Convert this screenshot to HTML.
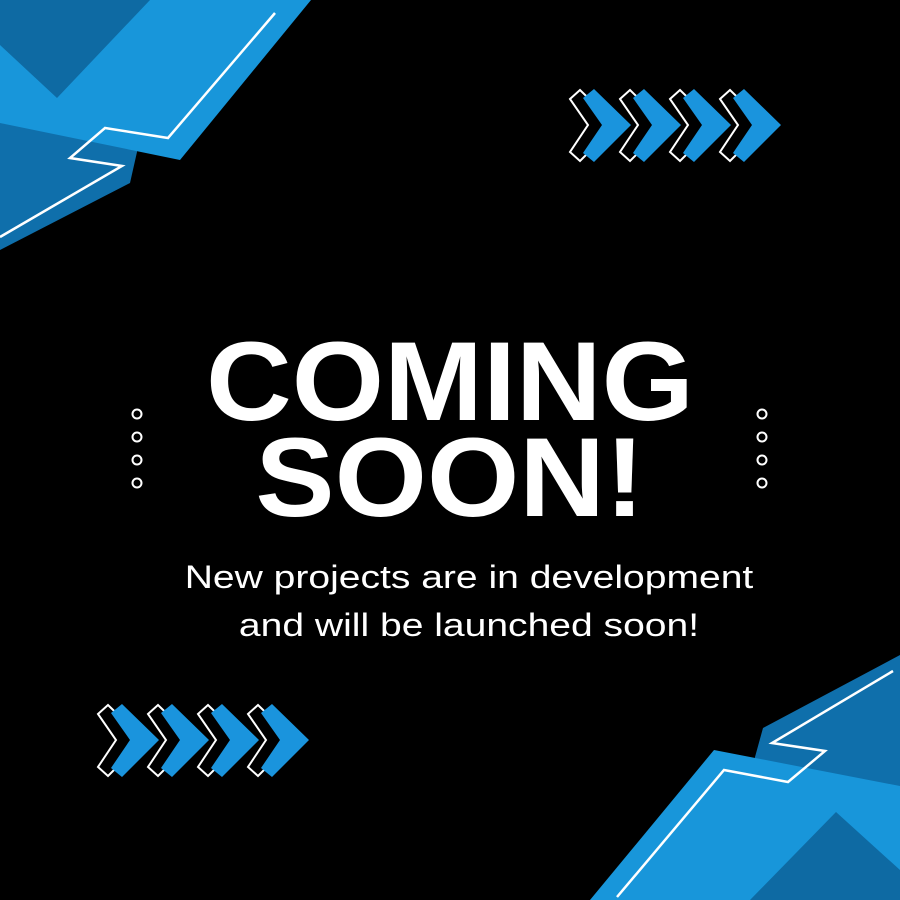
<!DOCTYPE html>
<html><head><style>
html,body{margin:0;padding:0;background:#000;}
body{width:900px;height:900px;position:relative;overflow:hidden;font-family:"Liberation Sans",sans-serif;}
.t{position:absolute;left:0;width:900px;text-align:center;color:#fff;}
</style></head><body>
<svg width="900" height="900" style="position:absolute;left:0;top:0">
<defs>
<g id="chev">
<polygon points="-13,10 -3,1 33,36 -3,72 -13,63 5,36" fill="#000" stroke="#fff" stroke-width="2"/>
<polygon points="0,9 11,0 48,36 11,73 0,64 19,36" fill="#1a94dd"/>
</g>
</defs>
<!-- top-left -->
<polygon points="0,100 140,120 137,152 130,183 0,250" fill="#0f6fab"/>
<polygon points="0,0 311,0 180,160 0,123" fill="#1896da"/>
<polygon points="0,0 150,0 57,98 0,45" fill="#0e6aa3"/>
<polyline points="275,13 168,138 105,128 70,158 122,166 0,237" fill="none" stroke="#fff" stroke-width="2.5"/>
<!-- bottom-right -->
<polygon points="900,655 900,900 740,900 755,757 763,728" fill="#0f6fab"/>
<polygon points="714,750 900,786 900,900 590,900" fill="#1896da"/>
<polygon points="836,812 900,870 900,900 750,900" fill="#0e6aa3"/>
<polyline points="893,671 772,743 825,751 788,782 724,770 617,897" fill="none" stroke="#fff" stroke-width="2.5"/>
<!-- chevrons -->
<use href="#chev" x="583" y="89"/><use href="#chev" x="633" y="89"/><use href="#chev" x="683" y="89"/><use href="#chev" x="733" y="89"/>
<use href="#chev" x="111" y="704"/><use href="#chev" x="161" y="704"/><use href="#chev" x="211" y="704"/><use href="#chev" x="261" y="704"/>
<!-- dots -->
<g fill="none" stroke="#fff" stroke-width="2">
<circle cx="137" cy="414" r="4.5"/><circle cx="137" cy="437" r="4.5"/><circle cx="137" cy="460" r="4.5"/><circle cx="137" cy="483" r="4.5"/>
<circle cx="762" cy="414" r="4.5"/><circle cx="762" cy="437" r="4.5"/><circle cx="762" cy="460" r="4.5"/><circle cx="762" cy="483" r="4.5"/>
</g>
</svg>
<div class="t" style="top:334px;font-size:112px;font-weight:bold;line-height:96px;transform:scaleX(1.06);">COMING<br>SOON!</div>
<div class="t" style="top:553px;left:19px;font-size:32px;line-height:48px;transform:scaleX(1.22);">New projects are in development<br>and will be launched soon!</div>
</body></html>
